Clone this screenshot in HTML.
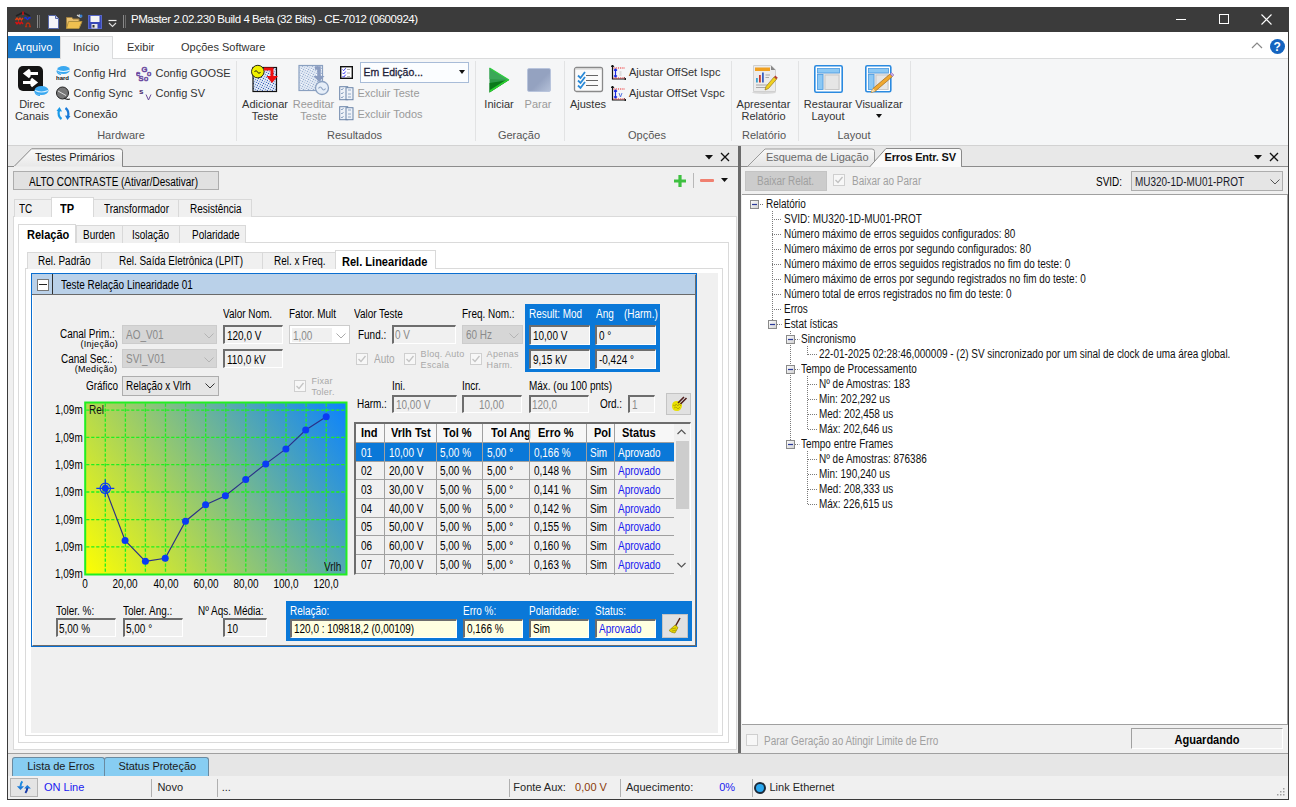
<!DOCTYPE html>
<html><head><meta charset="utf-8">
<style>
html,body{margin:0;padding:0;background:#fff;width:1296px;height:807px;overflow:hidden;position:relative}
*{box-sizing:border-box}
div,span,svg{position:absolute}
span{font-family:"Liberation Sans",sans-serif;white-space:pre;line-height:14px;font-size:11px;color:#000}
.s{color:#262626}
.m{font-size:12px;transform:scaleX(0.83);transform-origin:0 0;margin-top:0.8px}
.mc{transform-origin:50% 0}
.g{color:#8d8d8d}
</style></head><body>

<!-- window frame -->
<div style="left:7px;top:7px;width:1282px;height:793px;border:1px solid #3a3a3a;background:#f0f0f0"></div>
<!-- title bar -->
<div style="left:7px;top:7px;width:1282px;height:25px;background:#3b3b3b"></div>

<svg style="left:15px;top:11px" width="17" height="17" viewBox="0 0 17 17">
<path d="M1 5 L8 1.5 L15 5" stroke="#222" stroke-width="1.6" fill="none"/><path d="M8 0.5 V4" stroke="#e01010" stroke-width="1.4"/>
<path d="M0.5 9 l1.5-2 1.5 2 1.5-2 1.5 2 1.5-2" stroke="#e04010" stroke-width="1.3" fill="none"/>
<path d="M9.5 7.5 q1-2 2 0 q1 2 2 0 q1-2 2 0" stroke="#1830e0" stroke-width="1.4" fill="none"/>
<path d="M0.5 11 l1.5 2 1.5-2 1.5 2 1.5-2 1.5 2" stroke="#e01010" stroke-width="1.3" fill="none"/>
<path d="M10 15.5 h1.5 q-1-3 1.5-3.5 q2.5 .5 1.5 3.5 h1.5" stroke="#b03010" stroke-width="1.3" fill="none"/>
</svg>
<div style="left:37px;top:15px;width:3px;height:13px;border-left:1px solid #8a8a8a;border-right:1px solid #6a6a6a"></div>
<svg style="left:48px;top:15px" width="11" height="14" viewBox="0 0 11 14"><path d="M0.5 0.5 H7.5 L10.5 3.5 V13.5 H0.5 Z" fill="#f4f4f8" stroke="#5868a8"/><path d="M7.5 .5 V3.5 H10.5" fill="#c8d0f0" stroke="#5868a8"/></svg>
<svg style="left:66px;top:14px" width="17" height="15" viewBox="0 0 17 15"><path d="M0.5 3.5 H6 L7 5 H13 V14 H.5Z" fill="#e8c070" stroke="#a08040"/><path d="M2.5 7.5 H16 L13 14.5 H.5Z" fill="#f0c050" stroke="#b09040"/><path d="M11 1 l3 2 M13 .5 l2 3" stroke="#ddd" stroke-width="1.3"/><circle cx="15" cy="2" r="1.5" fill="#3a80d0"/></svg>
<svg style="left:88px;top:15px" width="14" height="14" viewBox="0 0 14 14"><rect x=".5" y=".5" width="13" height="13" fill="#3848b8" stroke="#5868c8"/><rect x="2.5" y="1" width="9" height="6" fill="#f4f4f4"/><rect x="3.5" y="9" width="6" height="4.5" fill="#e8e8e8"/><rect x="4.5" y="10" width="2" height="2.5" fill="#333"/></svg>
<svg style="left:108px;top:19px" width="9" height="9" viewBox="0 0 9 9"><path d="M0.5 1.5 H8.5" stroke="#eee" stroke-width="1.2"/><path d="M1 4 L4.5 7.5 L8 4" stroke="#ddd" stroke-width="1.1" fill="none"/></svg>
<div style="left:123px;top:15px;width:3px;height:13px;border-left:1px solid #8a8a8a;border-right:1px solid #6a6a6a"></div>
<span class="s" style="left:131px;top:12px;color:#fff;font-size:11.5px;letter-spacing:-0.45px">PMaster 2.02.230 Build 4 Beta (32 Bits) - CE-7012 (0600924)</span>
<div style="left:1176px;top:19px;width:10px;height:1px;background:#fff"></div>
<div style="left:1219px;top:14px;width:10px;height:10px;border:1px solid #fff"></div>
<svg style="left:1261px;top:14px" width="11" height="11" viewBox="0 0 11 11"><path d="M0.5 .5 L10.5 10.5 M10.5 .5 L.5 10.5" stroke="#fff" stroke-width="1.1"/></svg>
<div style="left:8px;top:58px;width:1280px;height:88px;background:#f5f6f7;border-top:1px solid #dadbdc;border-bottom:1px solid #d2d2d2"></div>
<div style="left:8px;top:32px;width:1280px;height:26px;background:#fff"></div>
<div style="left:8px;top:36px;width:52px;height:22px;background:#1a79cb"></div>
<div style="left:60px;top:36px;width:53px;height:23px;background:#f5f6f7;border:1px solid #dadbdc;border-bottom:none"></div>
<span class="s" style="left:15px;top:40.2px;color:#333;color:#fff">Arquivo</span>
<span class="s" style="left:73px;top:40.2px;color:#333;">Início</span>
<span class="s" style="left:127px;top:40.2px;color:#333;">Exibir</span>
<span class="s" style="left:181px;top:40.2px;color:#333;">Opções Software</span>
<div style="left:236px;top:61px;width:1px;height:80px;background:#e2e3e4"></div>
<div style="left:475px;top:61px;width:1px;height:80px;background:#e2e3e4"></div>
<div style="left:564px;top:61px;width:1px;height:80px;background:#e2e3e4"></div>
<div style="left:731px;top:61px;width:1px;height:80px;background:#e2e3e4"></div>
<div style="left:798px;top:61px;width:1px;height:80px;background:#e2e3e4"></div>
<div style="left:910px;top:61px;width:1px;height:80px;background:#e2e3e4"></div>
<svg style="left:17px;top:65px" width="32" height="31" viewBox="0 0 32 31">
<rect x="1" y="1" width="25" height="25" rx="5" fill="#141414"/>
<path d="M21 8.5 H10 M13 5 L8.5 8.5 L13 12" stroke="#fff" stroke-width="3.2" fill="none" stroke-linejoin="miter"/>
<path d="M6 17.5 H17 M14 14 L18.5 17.5 L14 21" stroke="#fff" stroke-width="3.2" fill="none"/>
<ellipse cx="24.5" cy="25.5" rx="7" ry="4.5" fill="#3aa8f0"/><path d="M18 25.5 q6.5 3 13 0" stroke="#d8f0ff" stroke-width="1.2" fill="none"/><path d="M18 26 q0 4 5 4.5" stroke="#3aa8f0" stroke-width="1.3" fill="none"/>
</svg>
<span class="s" style="left:7.0px;width:50px;text-align:center;top:97.2px;color:#333;">Direc</span>
<span class="s" style="left:7.0px;width:50px;text-align:center;top:109.4px;color:#333;">Canais</span>
<svg style="left:56px;top:65px" width="15" height="15" viewBox="0 0 15 15">
<ellipse cx="7.5" cy="5" rx="6.5" ry="4" fill="#3aa8f0"/><path d="M1 5 q6.5 3 13 0" stroke="#e0f4ff" stroke-width="1.2" fill="none"/><path d="M1 5.5 q0 3 4 4" stroke="#3aa8f0" stroke-width="1.2" fill="none"/>
<text x="0" y="14.5" font-family="Liberation Sans" font-weight="bold" font-size="6" fill="#111">hard</text></svg>
<span class="s" style="left:73.5px;top:65.5px;color:#333;">Config Hrd</span>
<svg style="left:56px;top:86px" width="15" height="15" viewBox="0 0 15 15">
<circle cx="6.5" cy="7" r="6" fill="#777" stroke="#222" stroke-width="1"/><path d="M2 5 L10 9.5" stroke="#ddd" stroke-width="1"/><path d="M8 12 q3 2 6 1" stroke="#222" stroke-width="1.2" fill="none"/></svg>
<span class="s" style="left:73.5px;top:86.2px;color:#333;">Config Sync</span>
<svg style="left:56px;top:106px" width="15" height="15" viewBox="0 0 15 15">
<path d="M5.5 13 Q1.5 10 3 4" stroke="#1a9ae8" stroke-width="2.2" fill="none"/><path d="M0.5 5 L3.5 1 L6 5.5Z" fill="#1a9ae8"/>
<path d="M9.5 2 Q13.5 5 12 11" stroke="#1a7ad8" stroke-width="2.2" fill="none"/><path d="M14.5 10 L11.5 14 L9 9.5Z" fill="#1a7ad8"/></svg>
<span class="s" style="left:73.5px;top:106.7px;color:#333;">Conexão</span>
<svg style="left:136px;top:65px" width="17" height="17" viewBox="0 0 17 17">
<g font-family="Liberation Sans" font-size="7.5" fill="none" stroke="#6a4aa0" stroke-width=".7">
<text x="5.5" y="6.5">G</text><text x="0" y="11">e</text><text x="11" y="11">o</text><text x="2.5" y="16">S</text><text x="8" y="16">o</text></g></svg>
<span class="s" style="left:155.5px;top:65.5px;color:#333;">Config GOOSE</span>
<svg style="left:139px;top:87px" width="14" height="14" viewBox="0 0 14 14">
<text x="0" y="7" font-family="Liberation Sans" font-weight="bold" font-size="8" fill="#4a2a6a">s</text>
<path d="M7 7.5 L9.5 13 L12 7.5" stroke="#6a4a9a" stroke-width="1" fill="none"/></svg>
<span class="s" style="left:155.5px;top:86.2px;color:#333;">Config SV</span>
<span class="s" style="left:81.0px;width:80px;text-align:center;top:127.9px;color:#333;color:#555">Hardware</span>
<svg style="left:248px;top:63px" width="32" height="30" viewBox="0 0 32 30">
<defs><pattern id="spk" width="5" height="5" patternUnits="userSpaceOnUse"><rect width="5" height="5" fill="#d4e0f0"/><rect x="0" y="0" width="1" height="1" fill="#3a5ab8"/><rect x="2" y="1" width="1" height="1" fill="#7090d0"/><rect x="4" y="2" width="1" height="1" fill="#4a6ac0"/><rect x="1" y="3" width="1" height="1" fill="#90a8e0"/><rect x="3" y="4" width="1" height="1" fill="#5070c8"/><rect x="3" y="0" width="1" height="1" fill="#f8f8ff"/><rect x="0" y="2" width="1" height="1" fill="#f4f8ff"/></pattern></defs>
<rect x="5" y="4.5" width="23.5" height="24" fill="url(#spk)" stroke="#111" stroke-width="1.2"/>
<circle cx="9.8" cy="8.6" r="6.3" fill="#f0f000" stroke="#111" stroke-width="0.9"/><path d="M6.5 9 q1.5-3 3 0 q1.5 3 3 0" stroke="#111" stroke-width="1" fill="none"/>
<path d="M16 6 H24 V14" stroke="#ee1010" stroke-width="3" fill="none"/><path d="M18.5 13 H30 L24 20Z" fill="#ee1010"/>
</svg>
<span class="s" style="left:235.0px;width:60px;text-align:center;top:97.2px;color:#333;">Adicionar</span>
<span class="s" style="left:235.0px;width:60px;text-align:center;top:109.4px;color:#333;">Teste</span>
<svg style="left:298px;top:64px" width="34" height="32" viewBox="0 0 34 32">
<defs><pattern id="spk2" width="5" height="5" patternUnits="userSpaceOnUse"><rect width="5" height="5" fill="#dde6f2"/><rect x="0" y="0" width="1" height="1" fill="#9aaed0"/><rect x="2" y="1" width="1" height="1" fill="#b0c0dc"/><rect x="4" y="2" width="1" height="1" fill="#a0b4d4"/><rect x="1" y="3" width="1" height="1" fill="#c0cce4"/><rect x="3" y="4" width="1" height="1" fill="#a8b8d8"/><rect x="3" y="0" width="1" height="1" fill="#fafcff"/></pattern></defs>
<rect x="1" y="1.5" width="23.5" height="25" fill="url(#spk2)" stroke="#8aa0c0" stroke-width="1.2"/>
<path d="M17 4 H21 V13" stroke="#8a9cc0" stroke-width="3.5" fill="none"/><path d="M15.5 12 H26.5 L21 18Z" fill="#8a9cc0"/>
<circle cx="24" cy="24" r="6.5" fill="#e6eef8" stroke="#8aa0c0" stroke-width="1.3"/><path d="M20.5 24.5 q1.7-3 3.5 0 q1.7 3 3.5 0" stroke="#8aa0c0" stroke-width="1.1" fill="none"/>
</svg>
<span class="s g" style="left:283.5px;width:60px;text-align:center;top:97.2px;color:#9a9a9a;">Reeditar</span>
<span class="s g" style="left:283.5px;width:60px;text-align:center;top:109.4px;color:#9a9a9a;">Teste</span>
<svg style="left:340px;top:66px" width="13" height="13" viewBox="0 0 13 13">
<rect x=".7" y=".7" width="11.6" height="11.6" fill="#fff" stroke="#111" stroke-width="1.4"/>
<path d="M2.5 3.5 l1.2 1.2 2-2.5 M2.5 6.8 l1.2 1.2 2-2.5 M2.5 10 l1.2 1.2 2-2.5" stroke="#2a2af0" stroke-width="0.9" fill="none"/><path d="M7 3.5 h3 M7 7 h3 M7 10.5 h3" stroke="#999" stroke-width="0.8"/></svg>
<div style="left:360px;top:62px;width:109px;height:21px;background:#fbfdff;border:1px solid #a8bcd8"></div>
<span class="s" style="left:363.5px;top:65.0px;color:#333;color:#1e1e3a;-webkit-text-stroke:0.3px #1e1e3a;font-size:10.5px">Em Edição...</span>
<svg style="left:459px;top:70px" width="7" height="5" viewBox="0 0 7 5"><path d="M0 0 H6 L3 4Z" fill="#111"/></svg>
<svg style="left:339px;top:86px" width="15" height="15" viewBox="0 0 15 15">
<rect x=".7" y=".7" width="8" height="13" fill="#eef2f8" stroke="#6a84a8" stroke-width="1"/><rect x="7" y="1.7" width="7" height="12" fill="#eef2f8" stroke="#6a84a8" stroke-width="1"/>
<path d="M2 3 l1 1 1.5-2 M2 7 l1 1 1.5-2 M2 11 l1 1 1.5-2 M9 4h3 M9 8h3 M9 11h3" stroke="#7a94b8" stroke-width=".8" fill="none"/></svg>
<svg style="left:339px;top:106px" width="15" height="15" viewBox="0 0 15 15">
<rect x=".7" y=".7" width="8" height="13" fill="#eef2f8" stroke="#6a84a8" stroke-width="1"/><rect x="7" y="1.7" width="7" height="12" fill="#eef2f8" stroke="#6a84a8" stroke-width="1"/>
<path d="M2 3 l1 1 1.5-2 M2 7 l1 1 1.5-2 M2 11 l1 1 1.5-2 M9 4h3 M9 8h3 M9 11h3" stroke="#7a94b8" stroke-width=".8" fill="none"/></svg>
<span class="s g" style="left:357.4px;top:85.9px;color:#9a9a9a;">Excluir Teste</span>
<span class="s g" style="left:357.4px;top:106.6px;color:#9a9a9a;">Excluir Todos</span>
<span class="s" style="left:314.5px;width:80px;text-align:center;top:127.9px;color:#333;color:#555">Resultados</span>
<svg style="left:488px;top:67px" width="22" height="27" viewBox="0 0 22 27">
<path d="M1.5 1 L21 13 L1.5 25.5Z" fill="#2e9a48"/><path d="M1.5 16 L21 13 L1.5 25.5Z" fill="#0a7a1a"/><path d="M1.5 1 L21 13 L1.5 12Z" fill="#3aa858"/><path d="M21 13 L1.5 25.5 L2 23 L18 13Z" fill="#2cd030"/><path d="M1.5 1 L21 13" stroke="#30d040" stroke-width="1.2"/></svg>
<span class="s" style="left:474.0px;width:50px;text-align:center;top:97.2px;color:#333;">Iniciar</span>
<div style="left:527px;top:68px;width:24px;height:24px;background:linear-gradient(135deg,#94a2c0 55%,#b4c0d8);border:1px solid #b8c4dc;border-radius:2px"></div>
<span class="s g" style="left:513.0px;width:50px;text-align:center;top:97.2px;color:#9a9a9a;">Parar</span>
<span class="s" style="left:489.0px;width:60px;text-align:center;top:127.9px;color:#333;color:#555">Geração</span>
<svg style="left:573px;top:66px" width="31" height="27" viewBox="0 0 31 27">
<rect x="1.5" y="1.5" width="28" height="24" rx="2" fill="#fafafa" stroke="#8a8a8a" stroke-width="1.3"/><path d="M2 3 H29" stroke="#ccc"/>
<path d="M5 9.5 l2.5 2.5 4.5-6 M5 14.5 l2.5 2.5 4.5-6 M5 19.5 l2.5 2.5 4.5-6" stroke="#2a8ad8" stroke-width="1.8" fill="none"/>
<path d="M13 9.5 H25 M13 14.5 H25 M13 19.5 H25" stroke="#666" stroke-width="1"/></svg>
<span class="s" style="left:558.0px;width:60px;text-align:center;top:97.2px;color:#333;">Ajustes</span>
<svg style="left:611px;top:65px" width="15" height="15" viewBox="0 0 15 15">
<path d="M1.5 0 V14 H15" stroke="#111" stroke-width="1.2" fill="none"/><path d="M0 2 L1.5 0 L3 2 M13 12.5 L15 14 L13 15.5" stroke="#111" stroke-width="1" fill="none"/>
<path d="M2.5 3 H14 M2.5 13 H14" stroke="#ee2020" stroke-width="1" stroke-dasharray="1.2 1"/><path d="M4.5 4 V12 M3 5.5 L4.5 4 L6 5.5 M3 10.5 L4.5 12 L6 10.5" stroke="#1a2ae0" stroke-width="1.2" fill="none"/>
<rect x="8.5" y="6" width="2" height="5" fill="#ddd"/></svg>
<svg style="left:611px;top:86px" width="15" height="15" viewBox="0 0 15 15">
<path d="M1.5 0 V14 H15" stroke="#111" stroke-width="1.2" fill="none"/><path d="M0 2 L1.5 0 L3 2 M13 12.5 L15 14 L13 15.5" stroke="#111" stroke-width="1" fill="none"/>
<path d="M2.5 3 H14 M2.5 13 H14" stroke="#ee2020" stroke-width="1" stroke-dasharray="1.2 1"/><path d="M4.5 4 V12 M3 5.5 L4.5 4 L6 5.5 M3 10.5 L4.5 12 L6 10.5" stroke="#1a2ae0" stroke-width="1.2" fill="none"/>
<path d="M8 7 L9.5 11 L11 7" stroke="#4a6ae0" stroke-width=".9" fill="none"/></svg>
<span class="s" style="left:628.9px;top:65.0px;color:#333;">Ajustar OffSet Ispc</span>
<span class="s" style="left:628.9px;top:85.5px;color:#333;">Ajustar OffSet Vspc</span>
<span class="s" style="left:617.0px;width:60px;text-align:center;top:127.9px;color:#333;color:#555">Opções</span>
<svg style="left:751px;top:64px" width="30" height="31" viewBox="0 0 30 31">
<ellipse cx="13" cy="28.5" rx="12" ry="1.5" fill="#d8d8d8"/>
<path d="M2.5 1.5 H20 L24.5 6 V27.5 H2.5Z" fill="#ececec" stroke="#d0d0d0"/><path d="M20 1.5 L24.5 6 L20 6Z" fill="#888"/>
<rect x="4" y="3.5" width="15" height="3.5" fill="#f0a020"/>
<rect x="5" y="14" width="1.8" height="4.5" fill="#3aa0d0"/><rect x="8" y="11" width="1.8" height="7.5" fill="#c83a30"/><rect x="11" y="8.5" width="1.8" height="10" fill="#3a60c0"/>
<path d="M14.5 11 H19 M14.5 13.5 H18 M5 21 H19 M5 23.5 H16" stroke="#a8a8a8"/>
<path d="M14 26 L15 22.5 L23 13 L25.5 15.2 L17.5 24.5Z" fill="#f0d020" stroke="#8a6a10" stroke-width=".6"/><path d="M23 13 L24.3 11.5 L26.8 13.7 L25.5 15.2Z" fill="#b84030"/></svg>
<span class="s" style="left:728.5px;width:70px;text-align:center;top:97.2px;color:#333;">Apresentar</span>
<span class="s" style="left:728.5px;width:70px;text-align:center;top:109.4px;color:#333;">Relatório</span>
<span class="s" style="left:729.0px;width:70px;text-align:center;top:127.9px;color:#333;color:#555">Relatório</span>
<svg style="left:814px;top:65px" width="29" height="28" viewBox="0 0 29 28">
<rect x=".8" y=".8" width="27.4" height="26.4" rx="1.5" fill="#fff" stroke="#2a8ae0" stroke-width="1.6"/>
<rect x="3" y="3" width="23" height="22" fill="#e8e8e8"/>
<rect x="3.5" y="3.5" width="22" height="4.5" fill="#8cc8f4" stroke="#4a9ae0" stroke-width=".8"/><rect x="3.5" y="9.5" width="5.5" height="15" fill="#8cc8f4" stroke="#4a9ae0" stroke-width=".8"/>
<rect x="11" y="10" width="14" height="14.5" fill="#e6e6e6" stroke="#c0c0c0" stroke-width=".8"/></svg>
<svg style="left:865px;top:65px" width="30" height="30" viewBox="0 0 30 30">
<rect x=".8" y=".8" width="25" height="26" rx="1.5" fill="#fff" stroke="#2a8ae0" stroke-width="1.6"/>
<rect x="3" y="3" width="21" height="22" fill="#e8e8e8"/>
<rect x="3.5" y="3.5" width="20" height="4.5" fill="#8cc8f4" stroke="#4a9ae0" stroke-width=".8"/><rect x="3.5" y="9.5" width="5.5" height="15" fill="#8cc8f4" stroke="#4a9ae0" stroke-width=".8"/>
<rect x="11" y="10" width="12" height="14.5" fill="#e6e6e6" stroke="#c0c0c0" stroke-width=".8"/>
<path d="M6 27.5 L8 23.5 L25 9 L27.5 11.5 L10.5 26Z" fill="#f0a830" stroke="#a06818" stroke-width=".7"/><path d="M25 9 L26.5 7.5 L29 10 L27.5 11.5Z" fill="#c8a8e8" stroke="#8868a8" stroke-width=".5"/><path d="M6 27.5 L8 23.5 L10.5 26Z" fill="#f4dcb0"/></svg>
<span class="s" style="left:798.0px;width:60px;text-align:center;top:97.2px;color:#333;">Restaurar</span>
<span class="s" style="left:798.0px;width:60px;text-align:center;top:109.4px;color:#333;">Layout</span>
<span class="s" style="left:849.0px;width:60px;text-align:center;top:97.2px;color:#333;">Visualizar</span>
<svg style="left:876px;top:114px" width="7" height="5" viewBox="0 0 7 5"><path d="M0 0 H6 L3 4Z" fill="#111"/></svg>
<span class="s" style="left:824.0px;width:60px;text-align:center;top:127.9px;color:#333;color:#555">Layout</span>
<svg style="left:1251px;top:42px" width="12" height="7" viewBox="0 0 12 7"><path d="M1 6 L6 1 L11 6" stroke="#888" stroke-width="1.2" fill="none"/></svg>
<div style="left:1270px;top:39px;width:15px;height:15px;border-radius:50%;background:#1565c0"></div>
<span style="left:1273.5px;top:39.5px;color:#fff;font-weight:bold;font-size:12px">?</span>
<div style="left:8px;top:146px;width:730px;height:608px;background:#f0f0f0"></div>
<div style="left:8px;top:146px;width:730px;height:20px;background:#e8e8e8"></div>
<div style="left:8px;top:166px;width:730px;height:1px;background:#8c8c8c"></div>
<svg style="left:13px;top:148px" width="112" height="19" viewBox="0 0 112 19">
<defs><linearGradient id="tg" x1="0" y1="0" x2="0" y2="1"><stop offset="0" stop-color="#fbfbfb"/><stop offset="1" stop-color="#e8e8e8"/></linearGradient></defs>
<path d="M1 18.5 L18.5 .8 H107 Q109.5 .8 109.5 3.3 V18.5" fill="url(#tg)" stroke="#858585" stroke-width="1"/></svg>
<div style="left:14px;top:166px;width:108px;height:1px;background:#ececec"></div>
<span class="s" style="left:35px;top:149.8px;letter-spacing:-0.1px;color:#1a1a1a">Testes Primários</span>
<svg style="left:705px;top:155px" width="9" height="5" viewBox="0 0 9 5"><path d="M0 0 H8 L4 4.5Z" fill="#111"/></svg>
<svg style="left:720px;top:152px" width="10" height="10" viewBox="0 0 10 10"><path d="M1 1 L9 9 M9 1 L1 9" stroke="#111" stroke-width="1.3"/></svg>
<div style="left:13px;top:171px;width:206px;height:19px;background:#e1e1e1;border:1px solid #adadad"></div>
<span class="m" style="left:29px;top:173.8px;">ALTO CONTRASTE (Ativar/Desativar)</span>
<svg style="left:673px;top:174px" width="14" height="14" viewBox="0 0 14 14"><path d="M7 1 V13 M1 7 H13" stroke="#3ec040" stroke-width="3.2"/></svg>
<div style="left:693px;top:173px;width:1px;height:15px;background:#b8b8b8"></div>
<div style="left:700px;top:179px;width:14px;height:3px;background:#f08070;border-radius:1px"></div>
<svg style="left:721px;top:178px" width="8" height="5" viewBox="0 0 8 5"><path d="M0 0 H7 L3.5 4Z" fill="#111"/></svg>
<div style="left:13px;top:216px;width:724px;height:534px;background:#fff;border:1px solid #dadada"></div>
<div style="left:14px;top:199px;width:38px;height:18px;background:#f0f0f0;border:1px solid #d9d9d9;border-bottom:none"></div>
<span class="m" style="left:19px;top:201.2px;">TC</span>
<div style="left:93px;top:199px;width:87px;height:18px;background:#f0f0f0;border:1px solid #d9d9d9;border-bottom:none"></div>
<span class="m" style="left:104px;top:201.2px;">Transformador</span>
<div style="left:178px;top:199px;width:74px;height:18px;background:#f0f0f0;border:1px solid #d9d9d9;border-bottom:none"></div>
<span class="m" style="left:190.3px;top:201.2px;">Resistência</span>
<div style="left:51px;top:197px;width:43px;height:20px;background:#fff;border:1px solid #d9d9d9;border-bottom:none"></div>
<span class="m" style="left:59.5px;top:201.2px;font-weight:bold;transform:scaleX(0.92)">TP</span>
<div style="left:18px;top:242px;width:711px;height:501px;background:#fff;border:1px solid #dadada"></div>
<div style="left:76px;top:225px;width:47px;height:18px;background:#f0f0f0;border:1px solid #d9d9d9;border-bottom:none"></div>
<span class="m" style="left:83px;top:227.2px;">Burden</span>
<div style="left:122px;top:225px;width:59px;height:18px;background:#f0f0f0;border:1px solid #d9d9d9;border-bottom:none"></div>
<span class="m" style="left:131.7px;top:227.2px;">Isolação</span>
<div style="left:179px;top:225px;width:67px;height:18px;background:#f0f0f0;border:1px solid #d9d9d9;border-bottom:none"></div>
<span class="m" style="left:192px;top:227.2px;">Polaridade</span>
<div style="left:18px;top:224px;width:58px;height:19px;background:#fff;border:1px solid #d9d9d9;border-bottom:none"></div>
<span class="m" style="left:26.5px;top:227.2px;font-weight:bold;transform:scaleX(0.92)">Relação</span>
<div style="left:25px;top:268px;width:698px;height:468px;background:#fff;border:1px solid #dadada"></div>
<div style="left:27px;top:252px;width:76px;height:17px;background:#f0f0f0;border:1px solid #d9d9d9;border-bottom:none"></div>
<span class="m" style="left:38.4px;top:253.6px;">Rel. Padrão</span>
<div style="left:101px;top:252px;width:163px;height:17px;background:#f0f0f0;border:1px solid #d9d9d9;border-bottom:none"></div>
<span class="m" style="left:118.5px;top:253.6px;">Rel. Saída Eletrônica (LPIT)</span>
<div style="left:262px;top:252px;width:75px;height:17px;background:#f0f0f0;border:1px solid #d9d9d9;border-bottom:none"></div>
<span class="m" style="left:273.8px;top:253.6px;">Rel. x Freq.</span>
<div style="left:335px;top:250px;width:101px;height:19px;background:#fff;border:1px solid #d9d9d9;border-bottom:none"></div>
<span class="m" style="left:342px;top:253.8px;font-weight:bold;transform:scaleX(0.92)">Rel. Linearidade</span>
<div style="left:31px;top:273px;width:687px;height:460px;background:#f0f0f0"></div>
<div style="left:31px;top:273px;width:666px;height:374px;border:1px solid #0a6ed0"></div>
<div style="left:32px;top:274px;width:664px;height:372px;border-top:1px solid #fff;border-left:1px solid #fff;border-right:1px solid #6d6d6d;border-bottom:1px solid #6d6d6d"></div>
<div style="left:32px;top:274px;width:663px;height:20px;background:#bad1e9"></div>
<div style="left:32px;top:294px;width:663px;height:1px;background:#6a6a6a"></div>
<div style="left:52px;top:274px;width:1px;height:20px;background:#303030"></div>
<div style="left:37px;top:279px;width:12px;height:12px;background:#fff;border:1px solid #777"></div>
<div style="left:39px;top:284px;width:8px;height:1.4px;background:#222"></div>
<span class="m" style="left:61px;top:277.7px;">Teste Relação Linearidade 01</span>
<span class="m" style="left:223px;top:305.9px;">Valor Nom.</span>
<span class="m" style="left:289.3px;top:305.9px;">Fator. Mult</span>
<span class="m" style="left:354.2px;top:306.1px;">Valor Teste</span>
<span class="m" style="left:462px;top:306.1px;">Freq. Nom.:</span>
<span class="m" style="left:59.8px;top:326.6px;">Canal Prim.:</span>
<span class="m" style="left:80.4px;top:338.2px;font-size:9px;line-height:11px;transform:none;letter-spacing:0.3px;">(Injeção)</span>
<span class="m" style="left:60.8px;top:351.3px;">Canal Sec.:</span>
<span class="m" style="left:74.7px;top:363.7px;font-size:9px;line-height:11px;transform:none;letter-spacing:0.3px;">(Medição)</span>
<span class="m" style="left:85.5px;top:378.0px;">Gráfico</span>
<div style="left:122px;top:325px;width:95px;height:19px;background:#d6d6d6;border:1px solid #cccccc"></div>
<span class="m g" style="left:126px;top:327.2px;color:#8a8a8a">AO_V01</span>
<svg style="left:203.5px;top:333px" width="10" height="6" viewBox="0 0 10 6"><path d="M.5 .5 L5 5 L9.5 .5" stroke="#b4b4b4" stroke-width="1" fill="none"/></svg>
<div style="left:122px;top:349px;width:95px;height:19px;background:#d6d6d6;border:1px solid #cccccc"></div>
<span class="m g" style="left:126px;top:351.2px;color:#8a8a8a">SVI_V01</span>
<svg style="left:203.5px;top:357px" width="10" height="6" viewBox="0 0 10 6"><path d="M.5 .5 L5 5 L9.5 .5" stroke="#b4b4b4" stroke-width="1" fill="none"/></svg>
<div style="left:122px;top:376px;width:97px;height:20px;background:#e5e5e5;border:1px solid #adadad"></div>
<span class="m" style="left:126px;top:378.7px;">Relação x Vlrh</span>
<svg style="left:205px;top:383px" width="10" height="6" viewBox="0 0 10 6"><path d="M.5 .5 L5 5 L9.5 .5" stroke="#333" stroke-width="1" fill="none"/></svg>
<div style="left:223px;top:325px;width:60px;height:19px;background:#f0f0f0;border-top:2px solid #6d6d6d;border-left:2px solid #6d6d6d;border-bottom:1px solid #fff;border-right:1px solid #fff"></div>
<span class="m" style="left:227px;top:328.2px;">120,0 V</span>
<div style="left:223px;top:349px;width:60px;height:19px;background:#f0f0f0;border-top:2px solid #6d6d6d;border-left:2px solid #6d6d6d;border-bottom:1px solid #fff;border-right:1px solid #fff"></div>
<span class="m" style="left:227px;top:352.2px;">110,0 kV</span>
<div style="left:289px;top:325px;width:61px;height:19px;background:#fff;border:1px solid #cccccc"></div>
<div style="left:292px;top:328px;width:40px;height:14px;background:#f0f0f0"></div>
<span class="m" style="left:293px;top:328.2px;color:#8a8a8a">1,00</span>
<svg style="left:335.5px;top:333px" width="10" height="6" viewBox="0 0 10 6"><path d="M.5 .5 L5 5 L9.5 .5" stroke="#aaa" stroke-width="1" fill="none"/></svg>
<svg style="left:294px;top:380px" width="12" height="12" viewBox="0 0 12 12"><rect x=".5" y=".5" width="11" height="11" fill="#f7f7f7" stroke="#cfcfcf"/><path d="M2.5 6 L5 8.5 L9.5 3" stroke="#c4c4c4" stroke-width="1.3" fill="none"/></svg>
<span class="m" style="left:311.4px;top:374.8px;font-size:9px;line-height:11px;transform:none;letter-spacing:0.3px;color:#a8a8a8">Fixar</span>
<span class="m" style="left:311.4px;top:385.9px;font-size:9px;line-height:11px;transform:none;letter-spacing:0.3px;color:#a8a8a8">Toler.</span>
<span class="m" style="left:357.9px;top:327.0px;">Fund.:</span>
<div style="left:391.5px;top:325px;width:64px;height:19px;background:#f0f0f0;border-top:2px solid #6d6d6d;border-left:2px solid #6d6d6d;border-bottom:1px solid #fff;border-right:1px solid #fff"></div>
<span class="m" style="left:395.3px;top:327.7px;color:#8a8a8a">0 V</span>
<div style="left:462px;top:325px;width:60.5px;height:19px;background:#d6d6d6;border:1px solid #cccccc"></div>
<span class="m" style="left:466px;top:327.7px;color:#8a8a8a">60 Hz</span>
<svg style="left:509px;top:333px" width="10" height="6" viewBox="0 0 10 6"><path d="M.5 .5 L5 5 L9.5 .5" stroke="#b4b4b4" stroke-width="1" fill="none"/></svg>
<svg style="left:356px;top:352.5px" width="12" height="12" viewBox="0 0 12 12"><rect x=".5" y=".5" width="11" height="11" fill="#f7f7f7" stroke="#cfcfcf"/><path d="M2.5 6 L5 8.5 L9.5 3" stroke="#c4c4c4" stroke-width="1.3" fill="none"/></svg>
<span class="m" style="left:373.7px;top:350.8px;color:#a8a8a8">Auto</span>
<svg style="left:404px;top:352.5px" width="12" height="12" viewBox="0 0 12 12"><rect x=".5" y=".5" width="11" height="11" fill="#f7f7f7" stroke="#cfcfcf"/><path d="M2.5 6 L5 8.5 L9.5 3" stroke="#c4c4c4" stroke-width="1.3" fill="none"/></svg>
<span class="m" style="left:420.6px;top:348.0px;font-size:9px;line-height:11px;transform:none;letter-spacing:0.3px;color:#a8a8a8">Bloq. Auto</span>
<span class="m" style="left:420.6px;top:359.2px;font-size:9px;line-height:11px;transform:none;letter-spacing:0.3px;color:#a8a8a8">Escala</span>
<svg style="left:469.5px;top:352.5px" width="12" height="12" viewBox="0 0 12 12"><rect x=".5" y=".5" width="11" height="11" fill="#f7f7f7" stroke="#cfcfcf"/><path d="M2.5 6 L5 8.5 L9.5 3" stroke="#c4c4c4" stroke-width="1.3" fill="none"/></svg>
<span class="m" style="left:486.6px;top:348.0px;font-size:9px;line-height:11px;transform:none;letter-spacing:0.3px;color:#a8a8a8">Apenas</span>
<span class="m" style="left:486.6px;top:359.2px;font-size:9px;line-height:11px;transform:none;letter-spacing:0.3px;color:#a8a8a8">Harm.</span>
<div style="left:525px;top:304px;width:135px;height:68px;background:#0a78d8"></div>
<span class="m" style="left:528.8px;top:306.1px;color:#fff">Result: Mod</span>
<span class="m" style="left:595.5px;top:306.1px;color:#fff">Ang</span>
<span class="m" style="left:624.1px;top:306.1px;color:#fff">(Harm.)</span>
<div style="left:528.5px;top:325px;width:61px;height:19.5px;background:#f0f0f0;border-top:2px solid #6d6d6d;border-left:2px solid #6d6d6d;border-bottom:1px solid #fff;border-right:1px solid #fff"></div>
<span class="m" style="left:532.9px;top:328.2px;">10,00 V</span>
<div style="left:595px;top:325px;width:61px;height:19.5px;background:#f0f0f0;border-top:2px solid #6d6d6d;border-left:2px solid #6d6d6d;border-bottom:1px solid #fff;border-right:1px solid #fff"></div>
<span class="m" style="left:598.5px;top:328.2px;">0 °</span>
<div style="left:528.5px;top:349px;width:61px;height:19.5px;background:#f0f0f0;border-top:2px solid #6d6d6d;border-left:2px solid #6d6d6d;border-bottom:1px solid #fff;border-right:1px solid #fff"></div>
<span class="m" style="left:532.9px;top:352.2px;">9,15 kV</span>
<div style="left:595px;top:349px;width:61px;height:19.5px;background:#f0f0f0;border-top:2px solid #6d6d6d;border-left:2px solid #6d6d6d;border-bottom:1px solid #fff;border-right:1px solid #fff"></div>
<span class="m" style="left:598.5px;top:352.2px;">-0,424 °</span>
<span class="m" style="left:391.6px;top:378.3px;">Ini.</span>
<span class="m" style="left:462.1px;top:378.3px;">Incr.</span>
<span class="m" style="left:528.8px;top:378.3px;">Máx. (ou 100 pnts)</span>
<span class="m" style="left:357.3px;top:396.2px;">Harm.:</span>
<div style="left:391.5px;top:394.5px;width:65px;height:18.5px;background:#f0f0f0;border-top:2px solid #6d6d6d;border-left:2px solid #6d6d6d;border-bottom:1px solid #fff;border-right:1px solid #fff"></div>
<span class="m" style="left:395.7px;top:396.9px;color:#8a8a8a">10,00 V</span>
<div style="left:462px;top:394.5px;width:60px;height:18.5px;background:#f0f0f0;border-top:2px solid #6d6d6d;border-left:2px solid #6d6d6d;border-bottom:1px solid #fff;border-right:1px solid #fff"></div>
<span class="m" style="left:478.6px;top:396.9px;color:#8a8a8a">10,00</span>
<div style="left:528.5px;top:394.5px;width:60px;height:18.5px;background:#f0f0f0;border-top:2px solid #6d6d6d;border-left:2px solid #6d6d6d;border-bottom:1px solid #fff;border-right:1px solid #fff"></div>
<span class="m" style="left:532px;top:396.9px;color:#8a8a8a">120,0</span>
<span class="m" style="left:600px;top:396.2px;">Ord.:</span>
<div style="left:628px;top:394.5px;width:27px;height:18.5px;background:#f0f0f0;border-top:2px solid #6d6d6d;border-left:2px solid #6d6d6d;border-bottom:1px solid #fff;border-right:1px solid #fff"></div>
<span class="m" style="left:631.5px;top:396.9px;color:#8a8a8a">1</span>
<div style="left:666px;top:393px;width:25px;height:22px;background:#e1e1e1;border:1px solid #c4c4c4"></div>
<svg style="left:669px;top:396px" width="19" height="17" viewBox="0 0 19 17">
<path d="M3 10 q0-5 5-5 q5 1 5 5 q-1 5-5 5 q-5 0-5-5Z" fill="#e8e000"/><path d="M4 9 l2 1 1-2 2 2 1-2 2 2 M5 12 l2-1 2 2 2-2" stroke="#b0a000" stroke-width=".8" fill="none"/>
<path d="M9 7 L15 1 M11.5 8 L17.5 2" stroke="#502020" stroke-width="1.6"/></svg>
<span class="m" style="left:56.3px;top:602.8px;">Toler. %:</span>
<span class="m" style="left:122.7px;top:602.8px;">Toler. Ang.:</span>
<span class="m" style="left:197.5px;top:602.8px;">Nº Aqs. Média:</span>
<div style="left:56.3px;top:618.3px;width:60px;height:18.5px;background:#f0f0f0;border-top:2px solid #6d6d6d;border-left:2px solid #6d6d6d;border-bottom:1px solid #fff;border-right:1px solid #fff"></div>
<span class="m" style="left:59px;top:621.2px;">5,00 %</span>
<div style="left:122.7px;top:618.3px;width:60px;height:18.5px;background:#f0f0f0;border-top:2px solid #6d6d6d;border-left:2px solid #6d6d6d;border-bottom:1px solid #fff;border-right:1px solid #fff"></div>
<span class="m" style="left:125.5px;top:621.2px;">5,00 °</span>
<div style="left:223px;top:618.3px;width:44px;height:18.5px;background:#f0f0f0;border-top:2px solid #6d6d6d;border-left:2px solid #6d6d6d;border-bottom:1px solid #fff;border-right:1px solid #fff"></div>
<span class="m" style="left:227px;top:621.2px;">10</span>
<div style="left:285.5px;top:601px;width:206px;height:40px;background:#0a78d8"></div>
<div style="left:491px;top:601px;width:201px;height:40px;background:#0a78d8"></div>
<span class="m" style="left:289.9px;top:602.8px;color:#fff">Relação:</span>
<span class="m" style="left:462.8px;top:602.8px;color:#fff">Erro %:</span>
<span class="m" style="left:528.6px;top:602.8px;color:#fff">Polaridade:</span>
<span class="m" style="left:595.3px;top:602.8px;color:#fff">Status:</span>
<div style="left:289.9px;top:618.5px;width:167px;height:19px;background:#ffffe1;border-top:2px solid #6d6d6d;border-left:2px solid #6d6d6d;border-bottom:1px solid #fff;border-right:1px solid #fff"></div>
<span class="m" style="left:293.9px;top:621.5px;color:#000">120,0 : 109818,2 (0,00109)</span>
<div style="left:462.8px;top:618.5px;width:60px;height:19px;background:#ffffe1;border-top:2px solid #6d6d6d;border-left:2px solid #6d6d6d;border-bottom:1px solid #fff;border-right:1px solid #fff"></div>
<span class="m" style="left:466.8px;top:621.5px;color:#000">0,166 %</span>
<div style="left:528.6px;top:618.5px;width:60.5px;height:19px;background:#ffffe1;border-top:2px solid #6d6d6d;border-left:2px solid #6d6d6d;border-bottom:1px solid #fff;border-right:1px solid #fff"></div>
<span class="m" style="left:532.6px;top:621.5px;color:#000">Sim</span>
<div style="left:595.3px;top:618.5px;width:60.5px;height:19px;background:#ffffe1;border-top:2px solid #6d6d6d;border-left:2px solid #6d6d6d;border-bottom:1px solid #fff;border-right:1px solid #fff"></div>
<span class="m" style="left:599.3px;top:621.5px;color:#1a1af0">Aprovado</span>
<div style="left:662px;top:614px;width:26px;height:24px;background:#e1e1e1;border:1px solid #c4c4c4"></div>
<svg style="left:667px;top:617px" width="16" height="18" viewBox="0 0 16 18">
<path d="M13 1 L8.5 9" stroke="#502018" stroke-width="1.5"/><path d="M8 8 L11 10.5 L8 16 Q5 16 2 13.5Z" fill="#e8d800" stroke="#8a7a00" stroke-width=".6"/><path d="M4 12 L9 11 M5 14 L9.5 13" stroke="#a09000" stroke-width=".7"/></svg>
<svg style="left:0px;top:0px" width="1296" height="807" viewBox="0 0 1296 807"><defs><linearGradient id="cg" gradientUnits="userSpaceOnUse" x1="85" y1="575" x2="347" y2="402">
<stop offset="0" stop-color="#ffff00"/><stop offset="1" stop-color="#0a82ff"/></linearGradient></defs><rect x="85.2" y="402.5" width="261.3" height="172.0" fill="url(#cg)" stroke="#22ee22" stroke-width="2"/><path d="M105.3 403.5 V573.5" stroke="#1ef01e" stroke-width="1.3" stroke-dasharray="3.2 1.8"/><path d="M125.4 403.5 V573.5" stroke="#1ef01e" stroke-width="1.3" stroke-dasharray="3.2 1.8"/><path d="M145.4 403.5 V573.5" stroke="#1ef01e" stroke-width="1.3" stroke-dasharray="3.2 1.8"/><path d="M165.5 403.5 V573.5" stroke="#1ef01e" stroke-width="1.3" stroke-dasharray="3.2 1.8"/><path d="M185.6 403.5 V573.5" stroke="#1ef01e" stroke-width="1.3" stroke-dasharray="3.2 1.8"/><path d="M205.7 403.5 V573.5" stroke="#1ef01e" stroke-width="1.3" stroke-dasharray="3.2 1.8"/><path d="M225.8 403.5 V573.5" stroke="#1ef01e" stroke-width="1.3" stroke-dasharray="3.2 1.8"/><path d="M245.8 403.5 V573.5" stroke="#1ef01e" stroke-width="1.3" stroke-dasharray="3.2 1.8"/><path d="M265.9 403.5 V573.5" stroke="#1ef01e" stroke-width="1.3" stroke-dasharray="3.2 1.8"/><path d="M286.0 403.5 V573.5" stroke="#1ef01e" stroke-width="1.3" stroke-dasharray="3.2 1.8"/><path d="M306.1 403.5 V573.5" stroke="#1ef01e" stroke-width="1.3" stroke-dasharray="3.2 1.8"/><path d="M326.2 403.5 V573.5" stroke="#1ef01e" stroke-width="1.3" stroke-dasharray="3.2 1.8"/><path d="M86.2 410.1 H345.5" stroke="#1ef01e" stroke-width="1.3" stroke-dasharray="3.2 1.8"/><path d="M86.2 437.4 H345.5" stroke="#1ef01e" stroke-width="1.3" stroke-dasharray="3.2 1.8"/><path d="M86.2 464.7 H345.5" stroke="#1ef01e" stroke-width="1.3" stroke-dasharray="3.2 1.8"/><path d="M86.2 492.0 H345.5" stroke="#1ef01e" stroke-width="1.3" stroke-dasharray="3.2 1.8"/><path d="M86.2 519.6 H345.5" stroke="#1ef01e" stroke-width="1.3" stroke-dasharray="3.2 1.8"/><path d="M86.2 546.9 H345.5" stroke="#1ef01e" stroke-width="1.3" stroke-dasharray="3.2 1.8"/><path d="M105.3 488.3 L125.1 540.5 L145.4 561.3 L165.2 558.3 L185.5 521.2 L205.6 504.7 L225.4 495.8 L245.7 479.6 L265.7 463.9 L285.9 448.9 L305.7 430 L326.2 416.7" stroke="#2a3088" stroke-width="1.15" fill="none"/><circle cx="105.3" cy="488.3" r="3.5" fill="#0a3af5"/><circle cx="125.1" cy="540.5" r="3.5" fill="#0a3af5"/><circle cx="145.4" cy="561.3" r="3.5" fill="#0a3af5"/><circle cx="165.2" cy="558.3" r="3.5" fill="#0a3af5"/><circle cx="185.5" cy="521.2" r="3.5" fill="#0a3af5"/><circle cx="205.6" cy="504.7" r="3.5" fill="#0a3af5"/><circle cx="225.4" cy="495.8" r="3.5" fill="#0a3af5"/><circle cx="245.7" cy="479.6" r="3.5" fill="#0a3af5"/><circle cx="265.7" cy="463.9" r="3.5" fill="#0a3af5"/><circle cx="285.9" cy="448.9" r="3.5" fill="#0a3af5"/><circle cx="305.7" cy="430" r="3.5" fill="#0a3af5"/><circle cx="326.2" cy="416.7" r="3.5" fill="#0a3af5"/><circle cx="105.3" cy="488.3" r="5.2" fill="none" stroke="#0a3af5" stroke-width="1.2"/><path d="M96.3 488.3 H114.3 M105.3 479.3 V497.3" stroke="#0a3af5" stroke-width="1.2"/></svg>
<span class="m" style="left:54.7px;top:402.5px;">1,09m</span>
<span class="m" style="left:54.7px;top:429.8px;">1,09m</span>
<span class="m" style="left:54.7px;top:457.1px;">1,09m</span>
<span class="m" style="left:54.7px;top:484.4px;">1,09m</span>
<span class="m" style="left:54.7px;top:512.0px;">1,09m</span>
<span class="m" style="left:54.7px;top:539.3px;">1,09m</span>
<span class="m" style="left:54.7px;top:566.4px;">1,09m</span>
<span class="m" style="left:88.5px;top:402.5px;color:#111">Rel</span>
<span class="m" style="left:323.5px;top:559.4px;color:#111">Vrlh</span>
<span class="m mc" style="left:55.2px;width:60px;text-align:center;top:576.2px">0</span>
<span class="m mc" style="left:95.4px;width:60px;text-align:center;top:576.2px">20,00</span>
<span class="m mc" style="left:135.5px;width:60px;text-align:center;top:576.2px">40,00</span>
<span class="m mc" style="left:175.7px;width:60px;text-align:center;top:576.2px">60,00</span>
<span class="m mc" style="left:215.8px;width:60px;text-align:center;top:576.2px">80,00</span>
<span class="m mc" style="left:256.0px;width:60px;text-align:center;top:576.2px">100,0</span>
<span class="m mc" style="left:296.2px;width:60px;text-align:center;top:576.2px">120,0</span>
<div style="left:354px;top:421.5px;width:337px;height:153px;background:#f0f0f0;border-top:2px solid #6d6d6d;border-left:2px solid #6d6d6d;border-bottom:1px solid #fff;border-right:1px solid #fff"></div>
<div style="left:356px;top:423.5px;width:318px;height:19px;background:#f7f7f7"></div>
<span class="m" style="left:361px;top:424.8px;font-weight:bold;transform:scaleX(0.92)">Ind</span>
<span class="m" style="left:391.3px;top:424.8px;font-weight:bold;transform:scaleX(0.92)">Vrlh Tst</span>
<span class="m" style="left:443.4px;top:424.8px;font-weight:bold;transform:scaleX(0.92)">Tol %</span>
<span class="m" style="left:491px;top:424.8px;font-weight:bold;transform:scaleX(0.92)">Tol Ang</span>
<span class="m" style="left:537.6px;top:424.8px;font-weight:bold;transform:scaleX(0.92)">Erro %</span>
<span class="m" style="left:593.6px;top:424.8px;font-weight:bold;transform:scaleX(0.92)">Pol</span>
<span class="m" style="left:621.5px;top:424.8px;font-weight:bold;transform:scaleX(0.92)">Status</span>
<div style="left:356px;top:442.5px;width:318px;height:132px;background:#f0f0f0"></div>
<div style="left:356px;top:442.5px;width:318px;height:18.4px;background:#0a78d8"></div>
<div style="left:356px;top:460.6px;width:318px;height:1px;background:#a0a0a0"></div>
<div style="left:356px;top:479.3px;width:318px;height:1px;background:#a0a0a0"></div>
<div style="left:356px;top:498.0px;width:318px;height:1px;background:#a0a0a0"></div>
<div style="left:356px;top:516.7px;width:318px;height:1px;background:#a0a0a0"></div>
<div style="left:356px;top:535.4px;width:318px;height:1px;background:#a0a0a0"></div>
<div style="left:356px;top:554.2px;width:318px;height:1px;background:#a0a0a0"></div>
<div style="left:356px;top:572.9px;width:318px;height:1px;background:#a0a0a0"></div>
<div style="left:356px;top:441.8px;width:318px;height:1px;background:#a0a0a0"></div>
<div style="left:384.0px;top:423.5px;width:1px;height:151px;background:#a0a0a0"></div>
<div style="left:435.8px;top:423.5px;width:1px;height:151px;background:#a0a0a0"></div>
<div style="left:482.0px;top:423.5px;width:1px;height:151px;background:#a0a0a0"></div>
<div style="left:529.1px;top:423.5px;width:1px;height:151px;background:#a0a0a0"></div>
<div style="left:586.0px;top:423.5px;width:1px;height:151px;background:#a0a0a0"></div>
<div style="left:613.8px;top:423.5px;width:1px;height:151px;background:#a0a0a0"></div>
<span class="m" style="left:360.8px;top:444.9px;color:#fff">01</span>
<span class="m" style="left:389.2px;top:444.9px;color:#fff">10,00 V</span>
<span class="m" style="left:439.9px;top:444.9px;color:#fff">5,00 %</span>
<span class="m" style="left:486.9px;top:444.9px;color:#fff">5,00 °</span>
<span class="m" style="left:533.6px;top:444.9px;color:#fff">0,166 %</span>
<span class="m" style="left:590.3px;top:444.9px;color:#fff">Sim</span>
<span class="m" style="left:618.2px;top:444.9px;color:#fff">Aprovado</span>
<span class="m" style="left:360.8px;top:463.6px;color:#000">02</span>
<span class="m" style="left:389.2px;top:463.6px;color:#000">20,00 V</span>
<span class="m" style="left:439.9px;top:463.6px;color:#000">5,00 %</span>
<span class="m" style="left:486.9px;top:463.6px;color:#000">5,00 °</span>
<span class="m" style="left:533.6px;top:463.6px;color:#000">0,148 %</span>
<span class="m" style="left:590.3px;top:463.6px;color:#000">Sim</span>
<span class="m" style="left:618.2px;top:463.6px;color:#1a1af0">Aprovado</span>
<span class="m" style="left:360.8px;top:482.3px;color:#000">03</span>
<span class="m" style="left:389.2px;top:482.3px;color:#000">30,00 V</span>
<span class="m" style="left:439.9px;top:482.3px;color:#000">5,00 %</span>
<span class="m" style="left:486.9px;top:482.3px;color:#000">5,00 °</span>
<span class="m" style="left:533.6px;top:482.3px;color:#000">0,141 %</span>
<span class="m" style="left:590.3px;top:482.3px;color:#000">Sim</span>
<span class="m" style="left:618.2px;top:482.3px;color:#1a1af0">Aprovado</span>
<span class="m" style="left:360.8px;top:501.0px;color:#000">04</span>
<span class="m" style="left:389.2px;top:501.0px;color:#000">40,00 V</span>
<span class="m" style="left:439.9px;top:501.0px;color:#000">5,00 %</span>
<span class="m" style="left:486.9px;top:501.0px;color:#000">5,00 °</span>
<span class="m" style="left:533.6px;top:501.0px;color:#000">0,142 %</span>
<span class="m" style="left:590.3px;top:501.0px;color:#000">Sim</span>
<span class="m" style="left:618.2px;top:501.0px;color:#1a1af0">Aprovado</span>
<span class="m" style="left:360.8px;top:519.7px;color:#000">05</span>
<span class="m" style="left:389.2px;top:519.7px;color:#000">50,00 V</span>
<span class="m" style="left:439.9px;top:519.7px;color:#000">5,00 %</span>
<span class="m" style="left:486.9px;top:519.7px;color:#000">5,00 °</span>
<span class="m" style="left:533.6px;top:519.7px;color:#000">0,155 %</span>
<span class="m" style="left:590.3px;top:519.7px;color:#000">Sim</span>
<span class="m" style="left:618.2px;top:519.7px;color:#1a1af0">Aprovado</span>
<span class="m" style="left:360.8px;top:538.5px;color:#000">06</span>
<span class="m" style="left:389.2px;top:538.5px;color:#000">60,00 V</span>
<span class="m" style="left:439.9px;top:538.5px;color:#000">5,00 %</span>
<span class="m" style="left:486.9px;top:538.5px;color:#000">5,00 °</span>
<span class="m" style="left:533.6px;top:538.5px;color:#000">0,160 %</span>
<span class="m" style="left:590.3px;top:538.5px;color:#000">Sim</span>
<span class="m" style="left:618.2px;top:538.5px;color:#1a1af0">Aprovado</span>
<span class="m" style="left:360.8px;top:557.2px;color:#000">07</span>
<span class="m" style="left:389.2px;top:557.2px;color:#000">70,00 V</span>
<span class="m" style="left:439.9px;top:557.2px;color:#000">5,00 %</span>
<span class="m" style="left:486.9px;top:557.2px;color:#000">5,00 °</span>
<span class="m" style="left:533.6px;top:557.2px;color:#000">0,163 %</span>
<span class="m" style="left:590.3px;top:557.2px;color:#000">Sim</span>
<span class="m" style="left:618.2px;top:557.2px;color:#1a1af0">Aprovado</span>
<div style="left:674px;top:423.5px;width:16px;height:151px;background:#f0f0f0"></div>
<div style="left:675.5px;top:440.5px;width:13px;height:68px;background:#cdcdcd"></div>
<svg style="left:677px;top:429px" width="9" height="6" viewBox="0 0 9 6"><path d="M.5 5 L4.5 1 L8.5 5" stroke="#555" stroke-width="1.2" fill="none"/></svg>
<svg style="left:677px;top:562px" width="9" height="6" viewBox="0 0 9 6"><path d="M.5 1 L4.5 5 L8.5 1" stroke="#555" stroke-width="1.2" fill="none"/></svg>
<div style="left:737.5px;top:146px;width:3.5px;height:607px;background:#6a6a6a"></div>
<div style="left:741px;top:146px;width:547px;height:607px;background:#f0f0f0"></div>
<div style="left:741px;top:146px;width:547px;height:20px;background:#e8e8e8"></div>
<div style="left:741px;top:166px;width:547px;height:1px;background:#8c8c8c"></div>
<svg style="left:746px;top:147px" width="220" height="20" viewBox="0 0 220 20">
<defs><linearGradient id="tg2" x1="0" y1="0" x2="0" y2="1"><stop offset="0" stop-color="#f8f8f8"/><stop offset="1" stop-color="#e4e4e4"/></linearGradient></defs>
<path d="M1.5 19.5 L19 2 H126 Q128.5 2 128.5 4.5 V19.5" fill="url(#tg2)" stroke="#9a9a9a" stroke-width="1"/>
<path d="M124 19.5 L140 1.5 H213 Q215.5 1.5 215.5 4 V19.5" fill="#fafafa" stroke="#8a8a8a" stroke-width="1"/>
</svg>
<div style="left:871px;top:166px;width:90px;height:1px;background:#fafafa"></div>
<span class="s" style="left:766px;top:150.0px;color:#6a6a6a;letter-spacing:-0.05px">Esquema de Ligação</span>
<span class="s" style="left:884.6px;top:150.0px;font-weight:bold;color:#111;letter-spacing:-0.2px">Erros Entr. SV</span>
<svg style="left:1254px;top:155px" width="9" height="5" viewBox="0 0 9 5"><path d="M0 0 H8 L4 4.5Z" fill="#111"/></svg>
<svg style="left:1269px;top:152px" width="10" height="10" viewBox="0 0 10 10"><path d="M1 1 L9 9 M9 1 L1 9" stroke="#111" stroke-width="1.3"/></svg>
<div style="left:745px;top:171px;width:82px;height:20px;background:#cccccc;border:1px solid #c4c4c4"></div>
<span class="m" style="left:757.3px;top:172.8px;color:#a0a0a0">Baixar Relat.</span>
<svg style="left:833px;top:174px" width="12" height="12" viewBox="0 0 12 12"><rect x=".5" y=".5" width="11" height="11" fill="#f7f7f7" stroke="#cfcfcf"/><path d="M2.5 6 L5 8.5 L9.5 3" stroke="#c0c0c0" stroke-width="1.3" fill="none"/></svg>
<span class="m" style="left:851.5px;top:172.8px;color:#a0a0a0">Baixar ao Parar</span>
<span class="m" style="left:1095.7px;top:173.8px;">SVID:</span>
<div style="left:1131px;top:171px;width:152px;height:20px;background:#e5e5e5;border:1px solid #adadad"></div>
<span class="m" style="left:1135px;top:174.2px;color:#1a1a2a">MU320-1D-MU01-PROT</span>
<svg style="left:1270px;top:179px" width="10" height="6" viewBox="0 0 10 6"><path d="M.5 .5 L5 5 L9.5 .5" stroke="#555" stroke-width="1" fill="none"/></svg>
<div style="left:742px;top:194px;width:546px;height:531px;background:#fff;border-top:1px solid #a0a0a0;border-bottom:1px solid #a0a0a0;border-right:1px solid #a0a0a0"></div>
<svg style="left:0;top:0" width="1296" height="807" viewBox="0 0 1296 807"><path d="M760 204.5 H764.0" stroke="#7a7a7a" stroke-width="1" stroke-dasharray="1 1"/><path d="M772.5 211.0 V325.0" stroke="#7a7a7a" stroke-width="1" stroke-dasharray="1 1"/><path d="M772 219.5 H781.7" stroke="#7a7a7a" stroke-width="1" stroke-dasharray="1 1"/><path d="M772 234.5 H781.7" stroke="#7a7a7a" stroke-width="1" stroke-dasharray="1 1"/><path d="M772 249.5 H781.7" stroke="#7a7a7a" stroke-width="1" stroke-dasharray="1 1"/><path d="M772 264.5 H781.7" stroke="#7a7a7a" stroke-width="1" stroke-dasharray="1 1"/><path d="M772 279.5 H781.7" stroke="#7a7a7a" stroke-width="1" stroke-dasharray="1 1"/><path d="M772 294.5 H781.7" stroke="#7a7a7a" stroke-width="1" stroke-dasharray="1 1"/><path d="M772 309.5 H781.7" stroke="#7a7a7a" stroke-width="1" stroke-dasharray="1 1"/><path d="M777 324.5 H781.7" stroke="#7a7a7a" stroke-width="1" stroke-dasharray="1 1"/><path d="M790.5 331.0 V445.0" stroke="#7a7a7a" stroke-width="1" stroke-dasharray="1 1"/><path d="M795 339.5 H799.4" stroke="#7a7a7a" stroke-width="1" stroke-dasharray="1 1"/><path d="M807.5 346.0 V355.0" stroke="#7a7a7a" stroke-width="1" stroke-dasharray="1 1"/><path d="M808 354.5 H817.1" stroke="#7a7a7a" stroke-width="1" stroke-dasharray="1 1"/><path d="M795 369.5 H799.4" stroke="#7a7a7a" stroke-width="1" stroke-dasharray="1 1"/><path d="M807.5 376.0 V430.0" stroke="#7a7a7a" stroke-width="1" stroke-dasharray="1 1"/><path d="M808 384.5 H817.1" stroke="#7a7a7a" stroke-width="1" stroke-dasharray="1 1"/><path d="M808 399.5 H817.1" stroke="#7a7a7a" stroke-width="1" stroke-dasharray="1 1"/><path d="M808 414.5 H817.1" stroke="#7a7a7a" stroke-width="1" stroke-dasharray="1 1"/><path d="M808 429.5 H817.1" stroke="#7a7a7a" stroke-width="1" stroke-dasharray="1 1"/><path d="M795 444.5 H799.4" stroke="#7a7a7a" stroke-width="1" stroke-dasharray="1 1"/><path d="M807.5 451.0 V505.0" stroke="#7a7a7a" stroke-width="1" stroke-dasharray="1 1"/><path d="M808 459.5 H817.1" stroke="#7a7a7a" stroke-width="1" stroke-dasharray="1 1"/><path d="M808 474.5 H817.1" stroke="#7a7a7a" stroke-width="1" stroke-dasharray="1 1"/><path d="M808 489.5 H817.1" stroke="#7a7a7a" stroke-width="1" stroke-dasharray="1 1"/><path d="M808 504.5 H817.1" stroke="#7a7a7a" stroke-width="1" stroke-dasharray="1 1"/></svg>
<svg style="left:750.1px;top:199.8px" width="9" height="9" viewBox="0 0 9 9"><defs><linearGradient id="eg" x1="0" y1="0" x2="1" y2="1"><stop offset="0" stop-color="#fff"/><stop offset="1" stop-color="#d0d0d0"/></linearGradient></defs><rect x=".5" y=".5" width="8" height="8" fill="url(#eg)" stroke="#8a8a8a"/><path d="M2 4.5 H7" stroke="#2a3a9a" stroke-width="1.2"/></svg>
<span class="m" style="left:766.0px;top:195.9px;color:#111">Relatório</span>
<span class="m" style="left:783.7px;top:210.9px;color:#111">SVID: MU320-1D-MU01-PROT</span>
<span class="m" style="left:783.7px;top:225.9px;color:#111">Número máximo de erros seguidos configurados: 80</span>
<span class="m" style="left:783.7px;top:240.9px;color:#111">Número máximo de erros por segundo configurados: 80</span>
<span class="m" style="left:783.7px;top:255.9px;color:#111">Número máximo de erros seguidos registrados no fim do teste: 0</span>
<span class="m" style="left:783.7px;top:270.9px;color:#111">Número máximo de erros por segundo registrados no fim do teste: 0</span>
<span class="m" style="left:783.7px;top:285.9px;color:#111">Número total de erros registrados no fim do teste: 0</span>
<span class="m" style="left:783.7px;top:300.9px;color:#111">Erros</span>
<svg style="left:767.8px;top:319.8px" width="9" height="9" viewBox="0 0 9 9"><defs><linearGradient id="eg" x1="0" y1="0" x2="1" y2="1"><stop offset="0" stop-color="#fff"/><stop offset="1" stop-color="#d0d0d0"/></linearGradient></defs><rect x=".5" y=".5" width="8" height="8" fill="url(#eg)" stroke="#8a8a8a"/><path d="M2 4.5 H7" stroke="#2a3a9a" stroke-width="1.2"/></svg>
<span class="m" style="left:783.7px;top:315.9px;color:#111">Estat ísticas</span>
<svg style="left:785.5px;top:334.8px" width="9" height="9" viewBox="0 0 9 9"><defs><linearGradient id="eg" x1="0" y1="0" x2="1" y2="1"><stop offset="0" stop-color="#fff"/><stop offset="1" stop-color="#d0d0d0"/></linearGradient></defs><rect x=".5" y=".5" width="8" height="8" fill="url(#eg)" stroke="#8a8a8a"/><path d="M2 4.5 H7" stroke="#2a3a9a" stroke-width="1.2"/></svg>
<span class="m" style="left:801.4px;top:330.9px;color:#111">Sincronismo</span>
<span class="m" style="left:819.1px;top:345.9px;color:#111">22-01-2025 02:28:46,000009 - (2) SV sincronizado por um sinal de clock de uma área global.</span>
<svg style="left:785.5px;top:364.8px" width="9" height="9" viewBox="0 0 9 9"><defs><linearGradient id="eg" x1="0" y1="0" x2="1" y2="1"><stop offset="0" stop-color="#fff"/><stop offset="1" stop-color="#d0d0d0"/></linearGradient></defs><rect x=".5" y=".5" width="8" height="8" fill="url(#eg)" stroke="#8a8a8a"/><path d="M2 4.5 H7" stroke="#2a3a9a" stroke-width="1.2"/></svg>
<span class="m" style="left:801.4px;top:360.9px;color:#111">Tempo de Processamento</span>
<span class="m" style="left:819.1px;top:375.9px;color:#111">Nº de Amostras: 183</span>
<span class="m" style="left:819.1px;top:390.9px;color:#111">Min: 202,292 us</span>
<span class="m" style="left:819.1px;top:405.9px;color:#111">Med: 202,458 us</span>
<span class="m" style="left:819.1px;top:420.9px;color:#111">Máx: 202,646 us</span>
<svg style="left:785.5px;top:439.8px" width="9" height="9" viewBox="0 0 9 9"><defs><linearGradient id="eg" x1="0" y1="0" x2="1" y2="1"><stop offset="0" stop-color="#fff"/><stop offset="1" stop-color="#d0d0d0"/></linearGradient></defs><rect x=".5" y=".5" width="8" height="8" fill="url(#eg)" stroke="#8a8a8a"/><path d="M2 4.5 H7" stroke="#2a3a9a" stroke-width="1.2"/></svg>
<span class="m" style="left:801.4px;top:435.9px;color:#111">Tempo entre Frames</span>
<span class="m" style="left:819.1px;top:450.9px;color:#111">Nº de Amostras: 876386</span>
<span class="m" style="left:819.1px;top:465.9px;color:#111">Min: 190,240 us</span>
<span class="m" style="left:819.1px;top:480.9px;color:#111">Med: 208,333 us</span>
<span class="m" style="left:819.1px;top:495.9px;color:#111">Máx: 226,615 us</span>
<svg style="left:746px;top:734px" width="12" height="12" viewBox="0 0 12 12"><rect x=".5" y=".5" width="11" height="11" fill="#f7f7f7" stroke="#cfcfcf"/></svg>
<span class="m" style="left:764px;top:733.2px;color:#a0a0a0">Parar Geração ao Atingir Limite de Erro</span>
<div style="left:1131px;top:728px;width:152px;height:21px;background:#f0f0f0;border-top:1px solid #a0a0a0;border-left:1px solid #a0a0a0;border-bottom:1px solid #fff;border-right:1px solid #fff"></div>
<span class="m mc" style="left:1131px;width:152px;text-align:center;top:732.7px;font-weight:bold;transform:scaleX(0.92)">Aguardando</span>
<div style="left:8px;top:753px;width:1280px;height:1px;background:#a0a0a0"></div>
<div style="left:8px;top:754px;width:1280px;height:22px;background:#e6e6e6"></div>
<div style="left:12px;top:757px;width:93px;height:19px;background:#87cdf2;border:1px solid #6a8aa0;border-bottom:none;border-radius:3px 3px 0 0"></div>
<span class="s" style="left:27.3px;top:759.0px;color:#1a1a1a;letter-spacing:-0.05px">Lista de Erros</span>
<div style="left:104px;top:757px;width:105px;height:19px;background:#87cdf2;border:1px solid #6a8aa0;border-bottom:none;border-radius:3px 3px 0 0"></div>
<span class="s" style="left:118.5px;top:759.0px;color:#1a1a1a;letter-spacing:-0.05px">Status Proteção</span>
<div style="left:8px;top:776px;width:1280px;height:23px;background:#f0f0f0"></div>
<div style="left:10px;top:778px;width:28px;height:19px;background:#e4e4e4;border:1.5px solid #b4b4b4"></div>
<svg style="left:10px;top:778px" width="28" height="19" viewBox="10 778 28 19">
<path d="M22.3 781.4 Q20.5 783.5 20.5 786.5" stroke="#1a8ae0" stroke-width="2" fill="none"/><path d="M16.9 786.3 H24.1 L20.5 790Z" fill="#1a7ad8"/>
<path d="M24.1 788.6 H30.9 L27.3 784.9Z" fill="#1a7ad8"/><path d="M27.3 788 Q27 791 25.4 793" stroke="#1a3aa8" stroke-width="2" fill="none"/></svg>
<span class="s" style="left:44px;top:779.8px;color:#1a1af0">ON Line</span>
<div style="left:151px;top:779px;width:1px;height:18px;background:#b0b0b0"></div>
<div style="left:217px;top:779px;width:1px;height:18px;background:#b0b0b0"></div>
<div style="left:508.5px;top:779px;width:1px;height:18px;background:#b0b0b0"></div>
<div style="left:619.8px;top:779px;width:1px;height:18px;background:#b0b0b0"></div>
<div style="left:751.6px;top:779px;width:1px;height:18px;background:#b0b0b0"></div>
<span class="s" style="left:157.4px;top:779.8px;">Novo</span>
<span class="s" style="left:221.7px;top:779.8px;">...</span>
<span class="s" style="left:513.3px;top:779.8px;">Fonte Aux:</span>
<span class="s" style="left:575.1px;top:779.8px;color:#8a3a0a">0,00 V</span>
<span class="s" style="left:626px;top:779.8px;">Aquecimento:</span>
<span class="s" style="left:719.2px;top:779.8px;color:#1a1af0">0%</span>
<div style="left:753.5px;top:782px;width:12px;height:12px;border-radius:50%;background:#2aa8f0;border:2px solid #1a2a3a"></div>
<span class="s" style="left:769.5px;top:779.8px;">Link Ethernet</span>
<svg style="left:1276px;top:787px" width="10" height="10" viewBox="0 0 10 10"><g fill="#a0a0a0"><rect x="7" y="1" width="1.5" height="1.5"/><rect x="4" y="4" width="1.5" height="1.5"/><rect x="7" y="4" width="1.5" height="1.5"/><rect x="1" y="7" width="1.5" height="1.5"/><rect x="4" y="7" width="1.5" height="1.5"/><rect x="7" y="7" width="1.5" height="1.5"/></g></svg>
</body></html>
